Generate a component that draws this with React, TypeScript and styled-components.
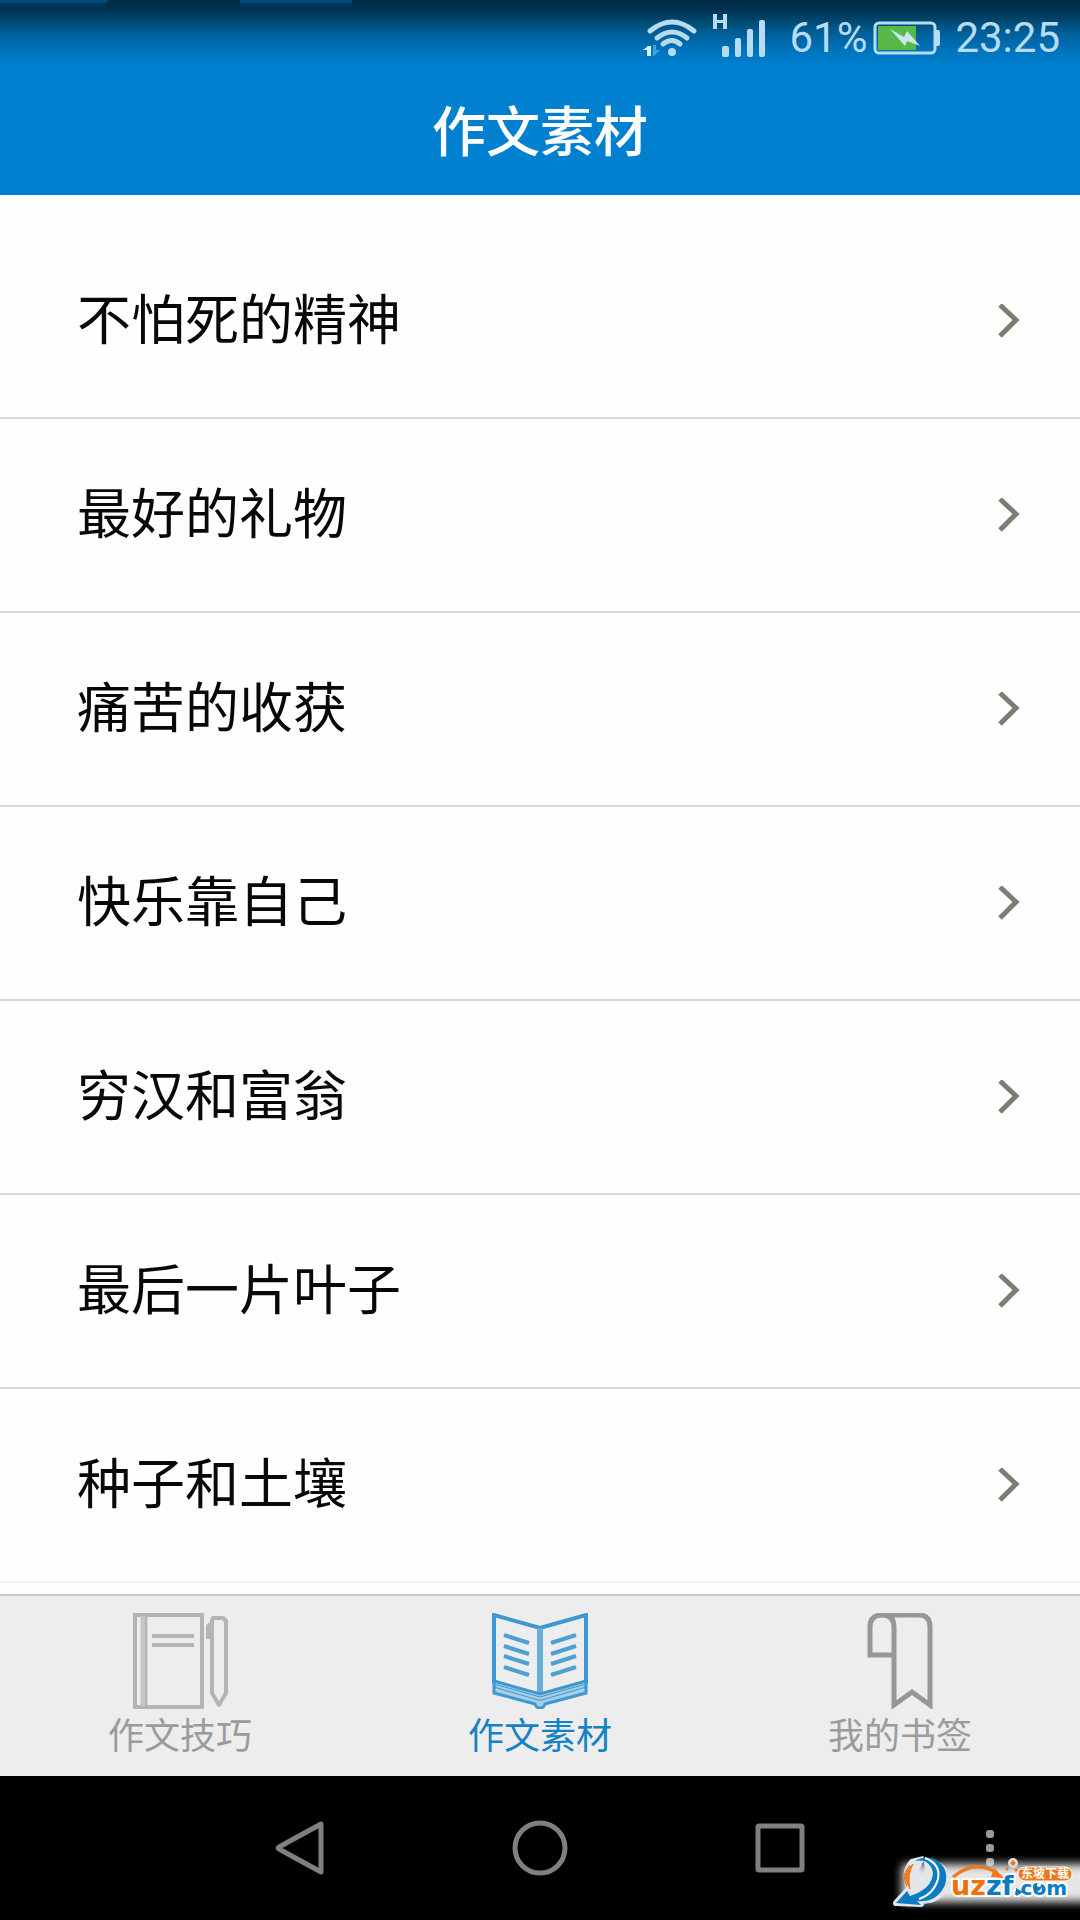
import React from "react";
import styled, { createGlobalStyle } from "styled-components";

const GlobalStyle = createGlobalStyle`
  * { box-sizing: border-box; }
  html, body { margin: 0; padding: 0; background: #fff; }
  body { font-family: "Noto Sans CJK SC", "Noto Sans", sans-serif; }
  a { color: inherit; text-decoration: none; }
  button { border: 0; padding: 0; margin: 0; background: none; font: inherit; color: inherit; cursor: pointer; }
  svg { display: block; flex: none; }
`;

const Screen = styled.div`
  display: flex;
  flex-direction: column;
  width: 100%;
  height: 100vh;
  background: #fefefe;
`;

const Header = styled.header`
  flex: none;
  background: linear-gradient(
    #002b43 0,
    #00304d 8px,
    #00456c 20px,
    #005a90 30px,
    #0069ab 42px,
    #0075bf 52px,
    #0080cf 66px
  );
`;

const StatusBar = styled.div`
  position: relative;
  display: flex;
  align-items: center;
  justify-content: flex-end;
  height: 76px;
  padding-right: 20px;
  color: #b5dcf3;
  font-family: Roboto, sans-serif;
  font-size: 42px;
  line-height: 78px;
`;

const Streaks = styled.svg`
  position: absolute;
  top: 0;
  left: 0;
`;

const SignalIcon = styled.svg`
  margin: 0 24px 4px 16px;
`;

const BatteryIcon = styled.svg`
  margin: 0 14px 0 6px;
`;

const Title = styled.h1`
  margin: 0;
  height: 119px;
  color: #fff;
  font-size: 54px;
  font-weight: 500;
  line-height: 106px;
  text-align: center;
`;

const List = styled.ul`
  flex: 1;
  min-height: 0;
  margin: 0;
  padding: 30px 0 0;
  overflow: hidden;
  list-style: none;
`;

const Item = styled.li`
  border-bottom: 2px solid #dadada;

  &:last-child {
    border-color: #f2f2f2;
  }
`;

const ItemLink = styled.a`
  display: flex;
  align-items: center;
  justify-content: space-between;
  height: 192px;
  padding: 0 58px 0 77px;
  color: #080808;
  font-size: 54px;
  line-height: 80px;
`;

const ItemName = styled.span`
  padding-bottom: 8px;
`;

const TabBar = styled.nav`
  display: grid;
  grid-template-columns: repeat(3, 1fr);
  flex: none;
  height: 182px;
  border-top: 2px solid #c8c8c8;
  background: #ededed;
`;

const Tab = styled.a<{ $active?: boolean }>`
  display: flex;
  flex-direction: column;
  align-items: center;
  padding-top: 17px;
  color: ${(p) => (p.$active ? "#1582c4" : "#9b9b9b")};
  font-size: 36px;
  line-height: 48px;
`;

const SystemBar = styled.nav`
  position: relative;
  display: grid;
  grid-template-columns: 3fr 4fr 4fr 4fr 3fr;
  flex: none;
  height: 144px;
  background: #000;
`;

const SystemButton = styled.button`
  display: flex;
  align-items: center;
  justify-content: center;
`;

const Watermark = styled.svg`
  position: absolute;
  right: 0;
  bottom: 0;
`;

const items = [
  "不怕死的精神",
  "最好的礼物",
  "痛苦的收获",
  "快乐靠自己",
  "穷汉和富翁",
  "最后一片叶子",
  "种子和土壤",
];

const Chevron = () => (
  <svg width="24" height="34" viewBox="0 0 24 34" fill="none" stroke="#7c7c70" strokeWidth="5">
    <path d="M2 1 L18 16 L2 32" />
  </svg>
);

const NotebookIcon = () => (
  <svg width="96" height="96" viewBox="0 0 96 96" fill="none" stroke="#b4b4b4" strokeWidth="4">
    <path d="M3 2H70V94H3Z" />
    <path d="M12 3V93" stroke="#c6c6c6" strokeWidth="7" />
    <path d="M14 3V93" strokeWidth="2" />
    <path d="M20 23H62M20 32H62" />
    <path d="M81 5H91L94 8V80L87 92L80 80V8Z" strokeLinejoin="round" />
    <path d="M80 10L76 13V26" />
  </svg>
);

const BookIcon = () => (
  <svg width="96" height="96" viewBox="0 0 96 96" fill="none" stroke="#3b98d0" strokeWidth="4">
    <path d="M2 70V2L48 15L94 2V70" />
    <path d="M48 15V80" stroke="#69aedb" strokeWidth="6" />
    <path d="M2 68L48 81L94 68V80L53 91Q52 95 48 95Q44 95 43 91L2 80Z" fill="#a8cde5" strokeWidth="3" />
    <path d="M2 74L46 87H50L94 74M2 71L48 84L94 71" strokeWidth="1" />
    <path d="M12 22L37 30M12 33L37 41M12 43L37 51M12 54L37 62M84 22L59 30M84 33L59 41M84 43L59 51M84 54L59 62" stroke="#4da0d2" />
  </svg>
);

const BookmarkIcon = () => (
  <svg width="96" height="96" viewBox="0 0 96 96" fill="none" stroke="#979797" strokeWidth="5">
    <path d="M42 42H18V14Q18 2 30 2H67Q78 2 78 14V92L60 79L42 92V14Q42 2 30 2" />
  </svg>
);

const tabs = [
  { label: "作文技巧", Icon: NotebookIcon, active: false },
  { label: "作文素材", Icon: BookIcon, active: true },
  { label: "我的书签", Icon: BookmarkIcon, active: false },
];

const SiteLogo = () => (
  <Watermark width="190" height="70" viewBox="0 0 190 70" role="img" aria-label="uzzf.com 东坡下载">
    <defs>
      <filter id="glow" x="-20%" y="-40%" width="140%" height="180%">
        <feGaussianBlur stdDeviation="5" />
      </filter>
    </defs>
    <rect x="12" y="14" width="190" height="38" rx="4" fill="#fff" opacity="0.9" filter="url(#glow)" />
    <g stroke="#e3e6e8" strokeWidth="6" strokeLinejoin="round" fill="#e3e6e8">
      <path d="M6 53L17 41L21 45Q42 34 37 13Q58 13 56 33Q52 52 28 51L31 54Z" />
      <path d="M21 42Q12 23 22 12L34 9" />
    </g>
    <path d="M25 11Q34 5 45 9Q60 18 55 35Q47 53 27 51L31 55L6 53L17 41L20 46Q42 39 43 23Q40 8 25 11Z" fill="#0b7cc2" />
    <path d="M35 8Q51 14 48 29Q44 44 29 49" fill="none" stroke="#fff" strokeWidth="2" />
    <path d="M23 14Q11 24 20 39Q17 25 23 14ZM20 15Q10 25 17 36Q12 25 20 15Z" fill="#f07818" stroke="#f07818" />
    <g fontFamily="DejaVu Sans, sans-serif" fontWeight="700" stroke="#fff" strokeWidth="4" paintOrder="stroke" strokeLinejoin="round">
      <text x="61" y="45" fontSize="27" fill="#f36f0a">uz</text>
      <text x="96" y="45" fontSize="27" fill="#0b7cc2">zf</text>
      <text x="123" y="45" fontSize="20" fill="#0b7cc2">.com</text>
    </g>
    <path d="M126 38L133 42L126 46Z" fill="#0b7cc2" />
    <circle cx="147" cy="37" r="4" fill="#0b7cc2" />
    <circle cx="149" cy="35" r="2" fill="#fff" />
    <path d="M63 27Q85 9 107 23" fill="none" stroke="#f07818" strokeWidth="3" />
    <path d="M104 18L114 28L101 27Z" fill="#f07818" />
    <circle cx="123" cy="13" r="5" fill="#ddd" />
    <path d="M123 10L126 13L123 16L120 13ZM117 17L119 19L117 21L115 19ZM126 18L128 20L126 22L124 20Z" fill="#f07818" />
    <rect x="128" y="17" width="54" height="14" rx="7" fill="#f07818" stroke="#fff" strokeWidth="1" />
    <text x="131" y="28" fontSize="12" fontWeight="700" fill="#fff">东坡下载</text>
  </Watermark>
);

export default function App() {
  return (
    <Screen>
      <GlobalStyle />
      <Header>
        <StatusBar>
          <Streaks width="352" height="8" viewBox="0 0 352 8" fill="#004a78" aria-hidden="true">
            <path d="M0 0H109L106 3H0ZM240 0H352V3H240Z" />
            <path d="M0 3H106V8H0ZM240 3H352V8H240Z" fill="#003657" />
          </Streaks>
          <svg width="54" height="38" viewBox="0 0 54 38" fill="none" stroke="#b5dcf3" strokeWidth="5" strokeLinecap="round">
            <path d="M7 12Q29 -6 51 12" />
            <path d="M14 19Q29 7 44 19" />
            <path d="M20 25Q29 18 37 25" />
            <circle cx="29" cy="33" r="4" fill="#b5dcf3" stroke="none" />
            <path d="M0 31L5 27H8V37H4V31Z" fill="#d5effc" stroke="none" />
            <path d="M10 26H13V31H17L11 37H10Z" fill="#3fa0df" stroke="none" />
          </svg>
          <SignalIcon width="52" height="44" viewBox="0 0 52 44" fill="#b5dcf3">
            <path d="M0 0H4V6H10V0H14V15H10V9H4V15H0Z" />
            <rect x="9" y="32" width="7" height="11" rx="2" />
            <rect x="22" y="24" width="6" height="19" rx="2" />
            <rect x="34" y="15" width="6" height="28" rx="2" />
            <rect x="46" y="6" width="6" height="37" rx="2" />
          </SignalIcon>
          <span>61%</span>
          <BatteryIcon width="68" height="34" viewBox="0 0 68 34">
            <rect x="2" y="2" width="60" height="30" rx="4" fill="none" stroke="#b5dcf3" strokeWidth="3" />
            <path d="M63 9H65Q67 9 67 11V23Q67 25 65 25H63Z" fill="#b5dcf3" />
            <rect x="5" y="5" width="38" height="24" fill="#58b847" />
            <path d="M17 8L31 16L34 10L47 25L34 20L32 25Z" fill="#c9e6ee" />
          </BatteryIcon>
          <span>23:25</span>
        </StatusBar>
        <Title>作文素材</Title>
      </Header>

      <List>
        {items.map((name) => (
          <Item key={name}>
            <ItemLink href="#">
              <ItemName>{name}</ItemName>
              <Chevron />
            </ItemLink>
          </Item>
        ))}
      </List>

      <TabBar>
        {tabs.map(({ label, Icon, active }) => (
          <Tab key={label} href="#" $active={active} aria-current={active ? "page" : undefined}>
            <Icon />
            <span>{label}</span>
          </Tab>
        ))}
      </TabBar>

      <SystemBar>
        <span />
        <SystemButton aria-label="返回">
          <svg width="60" height="60" viewBox="0 0 60 60" fill="none" stroke="#808080" strokeWidth="5" strokeLinejoin="round">
            <path d="M51 6V54L9 31Q7 30 9 29Z" />
          </svg>
        </SystemButton>
        <SystemButton aria-label="主屏幕">
          <svg width="60" height="60" viewBox="0 0 60 60" fill="none" stroke="#808080" strokeWidth="5">
            <circle cx="30" cy="30" r="25" />
          </svg>
        </SystemButton>
        <SystemButton aria-label="最近任务">
          <svg width="60" height="60" viewBox="0 0 60 60" fill="none" stroke="#808080" strokeWidth="5">
            <rect x="8" y="8" width="44" height="44" rx="1" />
          </svg>
        </SystemButton>
        <SystemButton aria-label="菜单">
          <svg width="8" height="40" viewBox="0 0 8 40" fill="#9a9a9a">
            <rect y="2" width="8" height="8" rx="3" />
            <rect y="16" width="8" height="8" rx="3" />
            <rect y="30" width="8" height="8" rx="3" />
          </svg>
        </SystemButton>
        <SiteLogo />
      </SystemBar>
    </Screen>
  );
}
